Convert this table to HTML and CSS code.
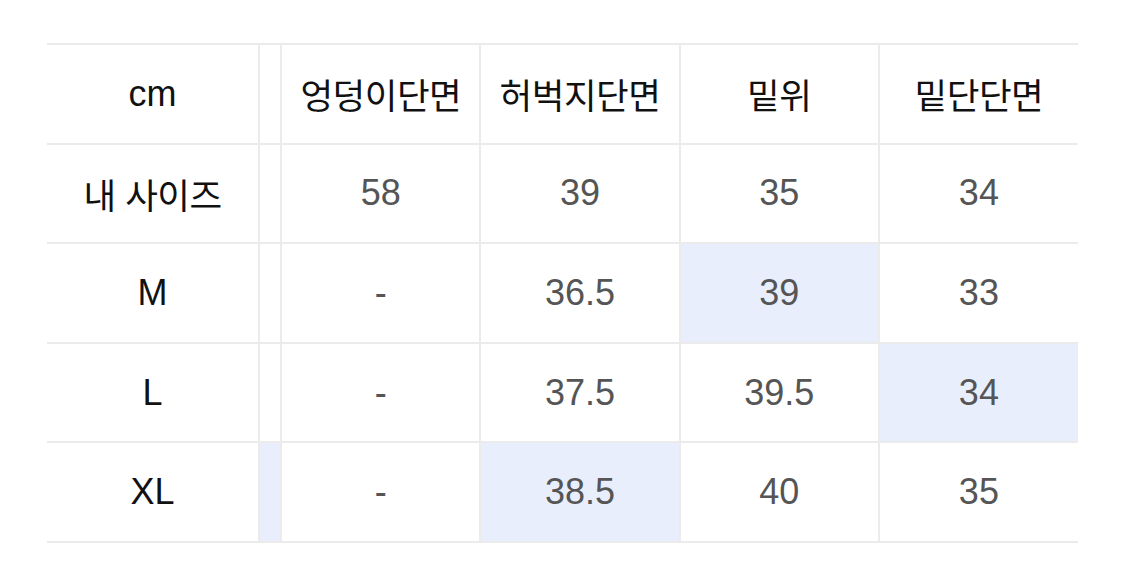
FILE: index.html
```html
<!DOCTYPE html>
<html lang="ko">
<head>
<meta charset="utf-8">
<title>사이즈표</title>
<link rel="stylesheet" href="styles.css">
</head>
<body>
<table class="size-table">
  <colgroup>
    <col class="c-label">
    <col class="c-gap">
    <col class="c-val">
    <col class="c-val">
    <col class="c-val">
    <col class="c-val">
  </colgroup>
  <tr class="head">
    <td class="label">cm</td>
    <td class="gap"></td>
    <td><span class="ko">엉덩이단면</span></td>
    <td><span class="ko">허벅지단면</span></td>
    <td><span class="ko">밑위</span></td>
    <td><span class="ko">밑단단면</span></td>
  </tr>
  <tr>
    <td class="label"><span class="ko">내 사이즈</span></td>
    <td class="gap"></td>
    <td class="val">58</td>
    <td class="val">39</td>
    <td class="val">35</td>
    <td class="val">34</td>
  </tr>
  <tr>
    <td class="label">M</td>
    <td class="gap"></td>
    <td class="val">-</td>
    <td class="val">36.5</td>
    <td class="val hl">39</td>
    <td class="val">33</td>
  </tr>
  <tr>
    <td class="label">L</td>
    <td class="gap"></td>
    <td class="val">-</td>
    <td class="val">37.5</td>
    <td class="val">39.5</td>
    <td class="val hl">34</td>
  </tr>
  <tr>
    <td class="label">XL</td>
    <td class="gap hl"></td>
    <td class="val">-</td>
    <td class="val hl">38.5</td>
    <td class="val">40</td>
    <td class="val">35</td>
  </tr>
</table>
</body>
</html>
```
FILE: styles.css
```css
html, body {
  margin: 0;
  padding: 0;
  background: #ffffff;
}
body {
  padding: 43px 0 0 47px;
  font-family: "Liberation Sans", Arial, "Noto Sans CJK KR", sans-serif;
}
.size-table {
  border-collapse: collapse;
  width: 1031px;
  table-layout: fixed;
}
.c-label { width: 212px; }
.c-gap { width: 22px; }
.c-val { width: 199px; }
.size-table td {
  height: 97.6px;
  padding: 0;
  text-align: center;
  vertical-align: middle;
  border-top: 2px solid #ebebeb;
  border-bottom: 2px solid #ebebeb;
  border-left: 2px solid #ebebeb;
  font-size: 36px;
  color: #111111;
}
.size-table td.label {
  border-left: none;
}
.size-table td.val {
  color: #555555;
}
.size-table td.hl {
  background: #e8eefc;
}
.ko {
  font-family: "Noto Sans CJK KR", sans-serif;
  font-size: 35.5px;
  font-weight: 400;
  letter-spacing: -0.5px;
}
```
